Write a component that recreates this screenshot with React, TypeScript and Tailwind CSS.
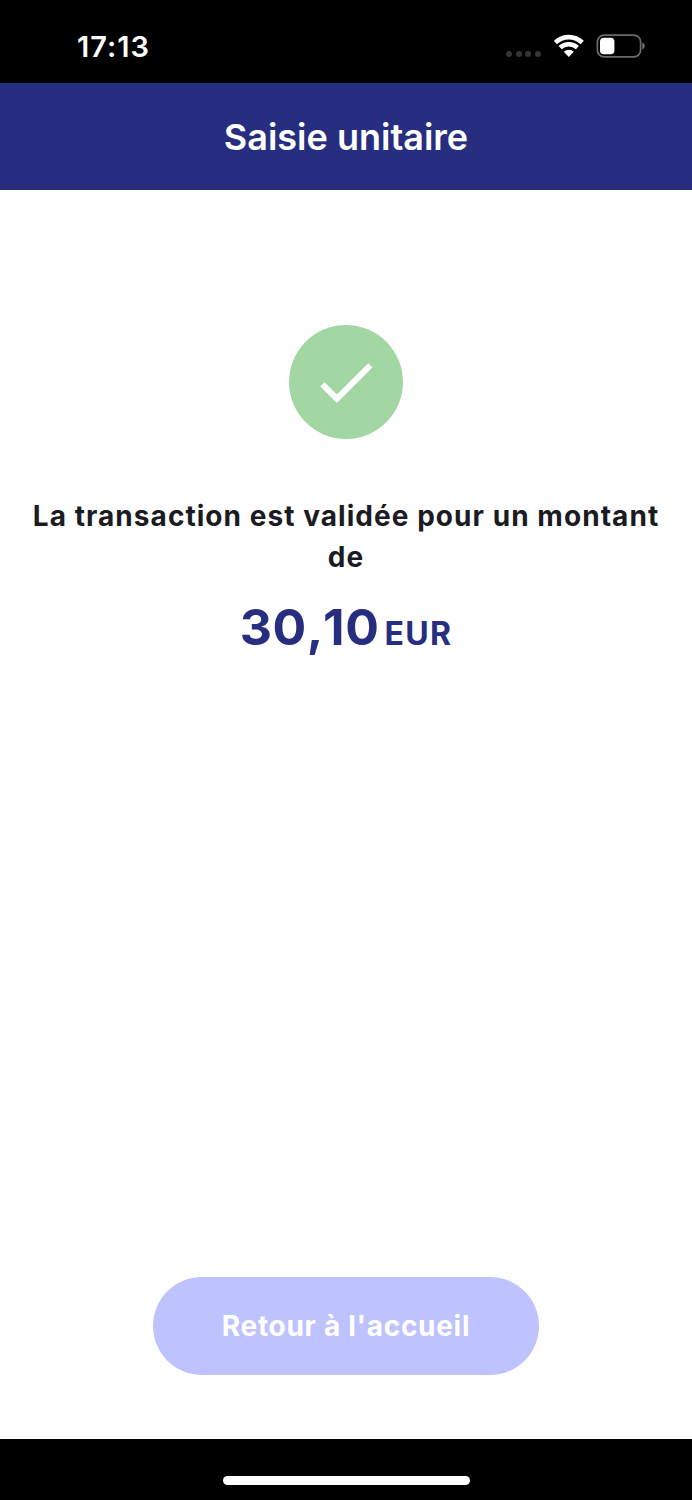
import React from 'react';

function WifiIcon() {
  return (
    <svg width="30" height="24" viewBox="0 0 30 24" fill="none">
      <path d="M1.4 8.5A19.4 19.4 0 0 1 28.2 8.5" stroke="#fff" strokeWidth="4.6" />
      <path d="M6.2 13.7A12.4 12.4 0 0 1 23.4 13.7" stroke="#fff" strokeWidth="4.6" />
      <path d="M9.8 17.8A7 7 0 0 1 19.8 17.8L14.8 23Z" fill="#fff" />
    </svg>
  );
}

function BatteryIcon() {
  return (
    <svg width="50" height="24" viewBox="0 0 50 24" fill="none">
      <rect x="1.4" y="1.2" width="43.2" height="21.6" rx="6.6" stroke="#6b6b6b" strokeWidth="1.7" />
      <rect x="4" y="3.8" width="14.4" height="16.4" rx="3.8" fill="#fff" />
      <path d="M46.4 8.6C49.4 9.8 49.4 14.2 46.4 15.4Z" fill="#777" />
    </svg>
  );
}

function StatusBar() {
  return (
    <div className="flex h-[83px] items-start justify-between bg-black pl-[77px] pr-[46px]">
      <span className="mt-[29px] text-[29px] leading-[36px] font-semibold tracking-[1px] text-white">17:13</span>
      <div className="mt-[34px] flex h-6">
        <div className="mt-[17px] mr-[13px] flex gap-[3.5px]">
          {[0, 1, 2, 3].map((dot) => (
            <span key={dot} className="h-1.5 w-1.5 rounded-full bg-[#353535]" />
          ))}
        </div>
        <WifiIcon />
        <div className="ml-[12.5px] w-[50px]">
          <BatteryIcon />
        </div>
      </div>
    </div>
  );
}

export default function App() {
  return (
    <div className="flex h-[1500px] w-[692px] flex-col bg-white font-['Inter',sans-serif]">
      <StatusBar />

      <header className="flex h-[107px] items-center justify-center bg-[#272e7f]">
        <h1 className="text-[36px] leading-[44px] font-semibold text-white">Saisie unitaire</h1>
      </header>

      <main className="flex flex-1 flex-col items-center pt-[135px]">
        <div className="flex h-[114px] w-[114px] items-center justify-center rounded-full bg-[#a2d7a4]">
          <svg width="71" height="71" viewBox="0.25 0.1 24 24" fill="#fff">
            <path d="M9 16.17 4.83 12l-1.42 1.41L9 19 21 7l-1.41-1.41z" />
          </svg>
        </div>

        <p className="mt-[57px] w-[640px] text-center text-[28px] leading-[41px] font-[650] tracking-[1.05px] text-[#1b1b23]">
          La transaction est validée pour un montant de
        </p>

        <div className="mt-[18px] flex items-baseline gap-[5px] text-[#272e7f]">
          <span className="text-[50px] leading-[62px] font-[650] tracking-[0.6px]">
            30<span className="tracking-[-0.5px]">,</span>10
          </span>
          <span className="text-[32px] font-[650] tracking-[1.3px]">EUR</span>
        </div>

        <button className="mt-auto mb-[64px] h-[98px] w-[386px] rounded-full bg-[#bec2ff] text-[28px] font-[650] tracking-[0.7px] text-white">
          Retour à l'accueil
        </button>
      </main>

      {/* Home indicator */}
      <div className="flex h-[61px] justify-center bg-black pt-[37px]">
        <div className="h-[9px] w-[247px] rounded-full bg-white" />
      </div>
    </div>
  );
}
